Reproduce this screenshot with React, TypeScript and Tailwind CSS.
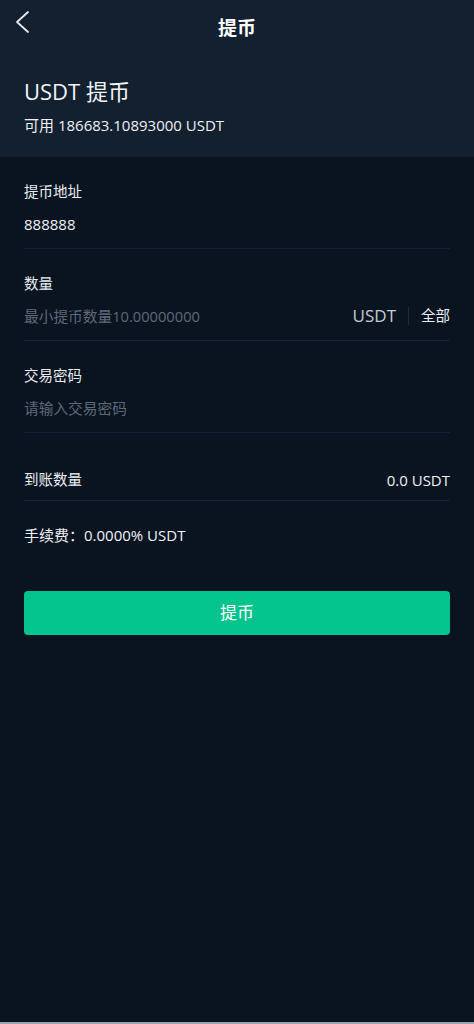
const font = { fontFamily: '"Open Sans", "Noto Sans CJK SC", sans-serif' };

const Field = ({ label, children }: { label: string; children: React.ReactNode }) => (
    <div className="border-b border-[#18243a]/80 pt-[25px] pb-[13px]">
        <div className="text-[14.5px] leading-[20px] text-[#e8ecf1]">{label}</div>
        <div className="mt-[11px] h-[22px] flex items-center">{children}</div>
    </div>
);

export default function App() {
    return (
        <div className="h-screen w-full bg-[#9ba3ad]" style={font}>
            <div className="h-[1022px] w-full bg-[#0a1420] flex flex-col">
                {/* Top header */}
                <div className="bg-[#13202f]">
                    <div className="relative h-[56px] flex items-center justify-center">
                        <button className="absolute left-[12px] top-[8px] p-[2px]">
                            <svg width="16" height="24" viewBox="0 0 16 24" fill="none">
                                <path d="M14 2 L3 12 L14 22" stroke="#e6eaf0" strokeWidth="1.8" strokeLinecap="round" strokeLinejoin="round" />
                            </svg>
                        </button>
                        <h1 className="text-[19px] font-bold text-white">提币</h1>
                    </div>
                    <div className="px-[24px] pt-[20px] pb-[22px]">
                        <div className="text-[22px] leading-[30px] text-[#f1f4f7]">USDT 提币</div>
                        <div className="mt-[9px] text-[15px] leading-[20px] text-[#eef1f5]">可用 186683.10893000 USDT</div>
                    </div>
                </div>

                {/* Form */}
                <div className="px-[24px]">
                    <Field label="提币地址">
                        <span className="text-[15px] text-[#eef1f5]">888888</span>
                    </Field>
                    <Field label="数量">
                        <span className="flex-1 text-[14.7px] text-[#5d6978]">最小提币数量10.00000000</span>
                        <span className="text-[17px] text-[#c3cad3]">USDT</span>
                        <span className="mx-[12px] h-[18px] w-px bg-[#1e2a3a]" />
                        <span className="text-[14.5px] text-[#eef1f5]">全部</span>
                    </Field>
                    <Field label="交易密码">
                        <span className="text-[14.7px] text-[#5d6978]">请输入交易密码</span>
                    </Field>
                    <div className="flex items-center justify-between border-b border-[#18243a]/80 pt-[37px] pb-[10px] text-[14.5px] leading-[20px] text-[#eef1f5]">
                        <span>到账数量</span>
                        <span className="text-[15px]">0.0 USDT</span>
                    </div>
                    <div className="pt-[24px] text-[15px] leading-[20px] text-[#eef1f5]">手续费：0.0000% USDT</div>
                    <button className="mt-[46px] h-[44px] w-full rounded-[4px] bg-[#03c48c] text-[17px] text-white">提币</button>
                </div>
            </div>
        </div>
    );
}
